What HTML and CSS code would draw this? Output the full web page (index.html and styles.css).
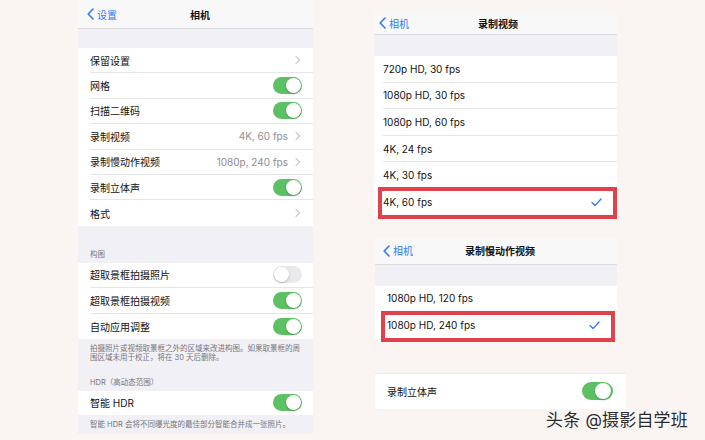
FILE: index.html
```html
<!DOCTYPE html>
<html lang="zh-CN">
<head>
  <meta charset="UTF-8">
  <meta name="viewport" content="width=device-width, initial-scale=1.0">
  <title>相机设置</title>
  <link rel="stylesheet" href="styles.css">
</head>
<body>
  <div class="canvas">
    <div class="panel panel-camera">
      <div class="nav nav-main">
        <div class="back">
          <svg width="7" height="12" viewBox="0 0 7 12"><path d="M6 1 L1.2 6 L6 11" fill="none" stroke="#3478f6" stroke-width="1.6" stroke-linecap="round" stroke-linejoin="round"/></svg>
          <span>设置</span>
        </div>
        <div class="nav-title">相机</div>
        <div></div>
      </div>
      <div class="gap gap-top"></div>
      <div class="group">
        <div class="row"><div class="row-body"><span>保留设置</span><span class="chev"></span></div></div>
        <div class="row"><div class="row-body"><span>网格</span><span class="toggle on"></span></div></div>
        <div class="row"><div class="row-body"><span>扫描二维码</span><span class="toggle on"></span></div></div>
        <div class="row"><div class="row-body"><span>录制视频</span><span class="value">4K, 60 fps<span class="chev"></span></span></div></div>
        <div class="row"><div class="row-body"><span>录制慢动作视频</span><span class="value">1080p, 240 fps<span class="chev"></span></span></div></div>
        <div class="row"><div class="row-body"><span>录制立体声</span><span class="toggle on"></span></div></div>
        <div class="row"><div class="row-body"><span>格式</span><span class="chev"></span></div></div>
      </div>
      <div class="section-head head-compose">构图</div>
      <div class="group">
        <div class="row"><div class="row-body"><span>超取景框拍摄照片</span><span class="toggle"></span></div></div>
        <div class="row"><div class="row-body"><span>超取景框拍摄视频</span><span class="toggle on"></span></div></div>
        <div class="row"><div class="row-body"><span>自动应用调整</span><span class="toggle on"></span></div></div>
      </div>
      <div class="section-foot">拍摄照片或视频取景框之外的区域来改进构图。如果取景框的周围区域未用于校正，将在 30 天后删除。</div>
      <div class="section-head head-hdr">HDR（高动态范围）</div>
      <div class="group">
        <div class="row row-hdr"><div class="row-body"><span>智能 HDR</span><span class="toggle on"></span></div></div>
      </div>
      <div class="section-foot foot-hdr">智能 HDR 会将不同曝光度的最佳部分智能合并成一张照片。</div>
    </div>

    <div class="side">
      <div class="panel panel-video">
        <div class="nav nav-sub">
          <div class="back">
            <svg width="7" height="12" viewBox="0 0 7 12"><path d="M6 1 L1.2 6 L6 11" fill="none" stroke="#3478f6" stroke-width="1.6" stroke-linecap="round" stroke-linejoin="round"/></svg>
            <span>相机</span>
          </div>
          <div class="nav-title">录制视频</div>
          <div></div>
        </div>
        <div class="gap gap-sub"></div>
        <div class="group">
          <div class="row opt"><div class="row-body"><span>720p HD, 30 fps</span></div></div>
          <div class="row opt"><div class="row-body"><span>1080p HD, 30 fps</span></div></div>
          <div class="row opt"><div class="row-body"><span>1080p HD, 60 fps</span></div></div>
          <div class="row opt"><div class="row-body"><span>4K, 24 fps</span></div></div>
          <div class="row opt"><div class="row-body"><span>4K, 30 fps</span></div></div>
          <div class="row opt picked picked-a"><div class="row-body"><span>4K, 60 fps</span><svg class="check" width="11" height="9" viewBox="0 0 11 9"><path d="M1 4.6 L4 7.6 L10 1" fill="none" stroke="#3478f6" stroke-width="1.4" stroke-linecap="round" stroke-linejoin="round"/></svg></div></div>
        </div>
      </div>

      <div class="panel panel-slow">
        <div class="nav nav-sub nav-slow">
          <div class="back">
            <svg width="7" height="12" viewBox="0 0 7 12"><path d="M6 1 L1.2 6 L6 11" fill="none" stroke="#3478f6" stroke-width="1.6" stroke-linecap="round" stroke-linejoin="round"/></svg>
            <span>相机</span>
          </div>
          <div class="nav-title">录制慢动作视频</div>
          <div></div>
        </div>
        <div class="gap gap-sub"></div>
        <div class="group">
          <div class="row opt"><div class="row-body"><span>1080p HD, 120 fps</span></div></div>
          <div class="row opt picked picked-b"><div class="row-body"><span>1080p HD, 240 fps</span><svg class="check" width="11" height="9" viewBox="0 0 11 9"><path d="M1 4.6 L4 7.6 L10 1" fill="none" stroke="#3478f6" stroke-width="1.4" stroke-linecap="round" stroke-linejoin="round"/></svg></div></div>
        </div>
      </div>

      <div class="panel panel-stereo">
        <div class="row stereo"><div class="row-body"><span>录制立体声</span><span class="toggle on big"></span></div></div>
      </div>
    </div>
  </div>

  <div class="watermark">头条 @摄影自学班</div>
</body>
</html>
```

FILE: styles.css
```css
body {
  margin: 0;
  width: 705px;
  height: 440px;
  overflow: hidden;
  position: relative;
  background-color: #faf5f3;
  font-family: 'Inter', 'Noto Sans CJK SC', sans-serif;
  color: #111;
}

.canvas {
  display: flex;
  padding-left: 78px;
  gap: 61px;
}

.panel {
  background-color: #f1f0f5;
}

.panel-camera {
  width: 235px;
  height: 434px;
}

.nav {
  display: grid;
  grid-template-columns: 1fr auto 1fr;
  align-items: center;
  background-color: #f8f8f9;
  border-bottom: 1px solid #dcdce0;
  font-size: 10px;
}

.nav-main {
  height: 28px;
  padding-left: 9px;
}

.back {
  display: flex;
  align-items: center;
  gap: 3px;
  color: #3478f6;
}

.nav-title {
  font-weight: 700;
}

.gap-top {
  height: 19px;
}

.group {
  background-color: #fff;
}

.row {
  display: flex;
  height: 25.4px;
  padding-left: 12px;
  font-size: 10px;
}

.row-body {
  flex: 1;
  display: flex;
  align-items: center;
  justify-content: space-between;
  padding-right: 11px;
  border-bottom: 1px solid #e6e6e9;
}

.row:last-child .row-body {
  border-bottom: none;
}

.value {
  display: flex;
  align-items: center;
  gap: 5px;
  color: #8e8e93;
}

.chev {
  width: 5px;
  height: 5px;
  margin-right: 3px;
  border-top: 1px solid #c4c4c8;
  border-right: 1px solid #c4c4c8;
  transform: rotate(45deg);
}

.toggle {
  position: relative;
  width: 29px;
  height: 17px;
  border-radius: 9px;
  background-color: #e9e9eb;
}

.toggle::after {
  content: '';
  position: absolute;
  top: 1px;
  left: 1px;
  width: 15px;
  height: 15px;
  border-radius: 50%;
  background-color: #fff;
  box-shadow: 0 1px 2px rgba(0, 0, 0, 0.25);
}

.toggle.on {
  background-color: #5cc163;
}

.toggle.on::after {
  left: 13px;
}

.toggle.big {
  width: 31px;
  height: 18px;
}

.toggle.big::after {
  width: 16px;
  height: 16px;
}

.section-head {
  font-size: 7.5px;
  color: #77777c;
  padding: 0 0 4px 12px;
}

.head-compose {
  padding-top: 22px;
}

.head-hdr {
  padding-top: 8px;
}

.section-foot {
  font-size: 7.5px;
  line-height: 9.5px;
  color: #77777c;
  padding: 5px 11px 5px 12px;
}

.foot-hdr {
  padding-top: 5px;
}

.row-hdr {
  height: 24px;
}

.side {
  display: flex;
  flex-direction: column;
  padding-top: 12px;
}

.panel-video {
  width: 243px;
}

.nav-sub {
  height: 22px;
  padding-left: 5px;
}

.gap-sub {
  height: 21px;
}

.opt {
  height: 26.6px;
  padding-left: 9px;
}

.opt .row-body {
  padding-right: 15px;
}

.picked {
  position: relative;
}

.picked::after {
  content: '';
  position: absolute;
  border: 4px solid #e2414c;
}

.picked-a::after {
  top: -2px;
  bottom: -3px;
  left: 4px;
  right: 0;
}

.panel-slow {
  width: 242px;
  margin-top: 22px;
  margin-left: 1px;
}

.nav-slow {
  height: 26px;
  padding-left: 8px;
}

.panel-slow .opt {
  height: 26.5px;
  padding-left: 12px;
}

.panel-slow .opt .row-body {
  padding-right: 17px;
}

.picked-b::after {
  top: -1px;
  bottom: -3px;
  left: 6px;
  right: 2px;
}

.panel-stereo {
  width: 251px;
  margin-top: 34px;
  margin-left: 1px;
  background-color: #fff;
  border-top: 1px solid #ececef;
}

.stereo {
  height: 35px;
  padding-left: 12px;
}

.stereo .row-body {
  padding-right: 13px;
}

.watermark {
  position: absolute;
  left: 546px;
  top: 406px;
  font-size: 17px;
  color: #2b2b2b;
  letter-spacing: 0.2px;
  text-shadow: 0 0 2px #fff, 0 0 2px #fff;
}
```
